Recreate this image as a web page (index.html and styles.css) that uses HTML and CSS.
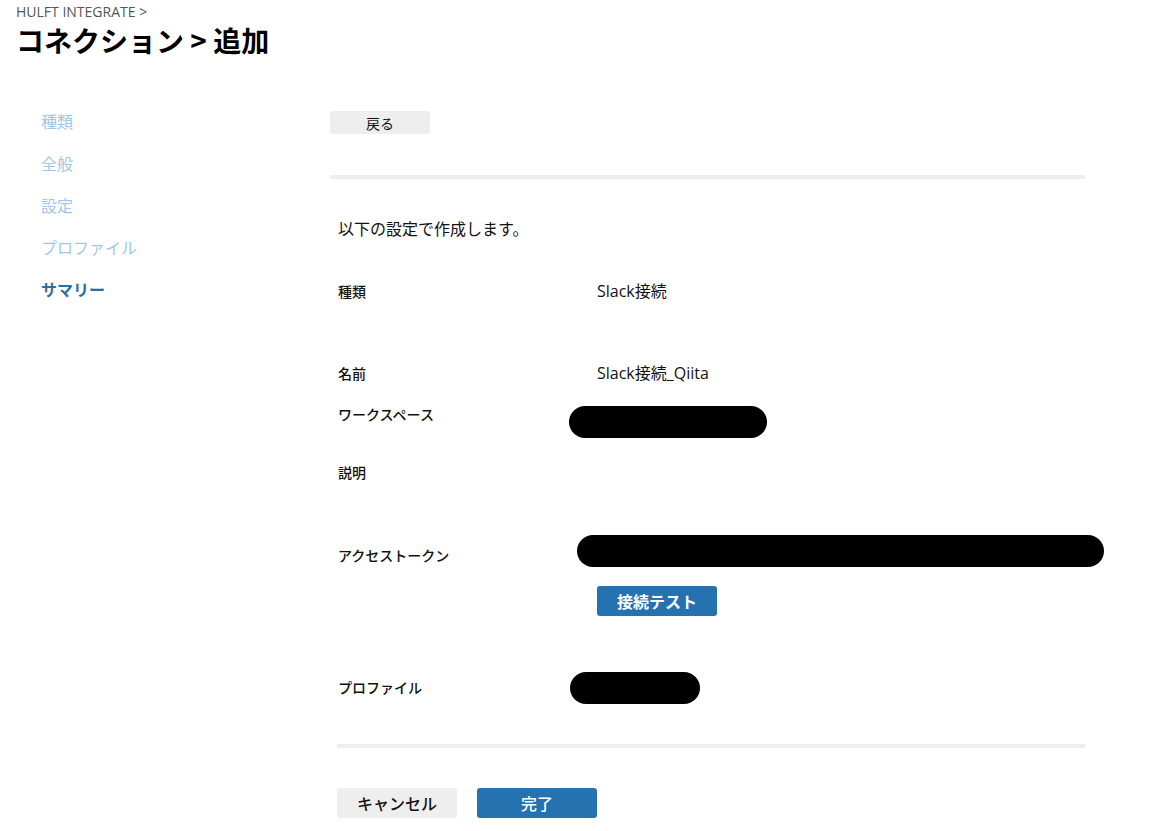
FILE: index.html
```html
<!DOCTYPE html>
<html lang="ja">
<head>
<meta charset="utf-8">
<title>コネクション > 追加</title>
<link rel="stylesheet" href="styles.css">
</head>
<body>
<header class="page-head">
  <div class="crumb">HULFT INTEGRATE &gt;</div>
  <h1 class="title">コネクション &gt; 追加</h1>
</header>

<div class="wizard">
  <nav class="steps">
    <div class="step">種類</div>
    <div class="step">全般</div>
    <div class="step">設定</div>
    <div class="step">プロファイル</div>
    <div class="step step-active">サマリー</div>
  </nav>

  <main class="panel">
    <button class="btn btn-gray btn-back">戻る</button>
    <div class="rule"></div>

    <section class="summary">
      <p class="intro">以下の設定で作成します。</p>

      <div class="row row-kind">
        <div class="label">種類</div>
        <div class="value">Slack接続</div>
      </div>
      <div class="row row-name">
        <div class="label">名前</div>
        <div class="value">Slack接続_Qiita</div>
      </div>
      <div class="row row-workspace">
        <div class="label">ワークスペース</div>
        <div class="value"><span class="mask mask-workspace"></span></div>
      </div>
      <div class="row row-desc">
        <div class="label">説明</div>
        <div class="value"></div>
      </div>
      <div class="row row-token">
        <div class="label">アクセストークン</div>
        <div class="value">
          <span class="mask mask-token"></span>
          <button class="btn btn-blue btn-test">接続テスト</button>
        </div>
      </div>
      <div class="row row-profile">
        <div class="label">プロファイル</div>
        <div class="value"><span class="mask mask-profile"></span></div>
      </div>

      <div class="rule rule-bottom"></div>

      <div class="actions">
        <button class="btn btn-gray btn-action">キャンセル</button>
        <button class="btn btn-blue btn-action">完了</button>
      </div>
    </section>
  </main>
</div>
</body>
</html>
```

FILE: styles.css
```css
* { box-sizing: border-box; }

body {
  margin: 0;
  background: #fff;
  color: #111;
  font-family: "Open Sans", "Noto Sans CJK JP", sans-serif;
}

.page-head {
  padding: 3px 0 0 16px;
}

.crumb {
  font-size: 14px;
  line-height: 18px;
  color: #555;
}

.title {
  margin: 0;
  font-family: "Noto Sans CJK JP", sans-serif;
  font-size: 28px;
  font-weight: 700;
  line-height: 38px;
  color: #000;
}

.wizard {
  display: flex;
  margin-top: 42px;
}

.steps {
  width: 330px;
  margin-top: -1px;
  padding-left: 41px;
  font-family: "Noto Sans CJK JP", sans-serif;
  font-size: 16px;
}

.step {
  height: 42px;
  line-height: 42px;
  color: #a0c6ea;
}

.step-active {
  color: #2a6ea8;
  font-weight: 700;
}

.panel {
  width: 755px;
}

.btn {
  border: 0;
  border-radius: 3px;
  font-family: "Noto Sans CJK JP", sans-serif;
  cursor: pointer;
}

.btn-gray { background: #eeeeee; color: #111; }
.btn-blue { background: #2572b0; color: #fff; }

.btn-back {
  display: block;
  margin-top: 10px;
  width: 100px;
  height: 23px;
  font-size: 14px;
  padding: 0;
}

.rule {
  height: 4px;
  background: #eeeeee;
  margin-top: 41px;
}

.summary {
  padding-left: 8px;
}

.intro {
  margin: 39px 0 0;
  font-family: "Noto Sans CJK JP", sans-serif;
  font-size: 16px;
  line-height: 20px;
}

.row {
  display: grid;
  grid-template-columns: 259px 1fr;
  align-items: start;
}

.label {
  font-family: "Noto Sans CJK JP", sans-serif;
  font-size: 14px;
  font-weight: 500;
  line-height: 20px;
}

.value {
  font-size: 16px;
  line-height: 20px;
}

.row-kind { margin-top: 43px; height: 82px; }
.row-name { height: 41px; }
.row-workspace { height: 58px; }
.row-desc { height: 73px; }
.row-token .label { padding-top: 10px; }
.row-profile { margin-top: 56px; }
.row-profile .label { padding-top: 5px; }

/* black redaction blobs laid over the hidden values */
.mask {
  display: block;
  height: 32px;
  border-radius: 16px;
  background: #000;
}

.mask-workspace { width: 198px; margin: 2px 0 0 -28px; }
.mask-token { width: 527px; margin-left: -20px; }
.mask-profile { width: 130px; margin-left: -27px; }

.btn-test {
  display: block;
  margin-top: 19px;
  width: 120px;
  height: 30px;
  font-size: 16px;
  font-weight: 700;
  padding: 0;
}

.rule-bottom {
  margin-top: 40px;
  margin-left: -1px;
}

.actions {
  display: flex;
  gap: 20px;
  margin-top: 40px;
  margin-left: -1px;
}

.btn-action {
  width: 120px;
  height: 30px;
  font-size: 16px;
  font-weight: 500;
  padding: 0;
}
```
